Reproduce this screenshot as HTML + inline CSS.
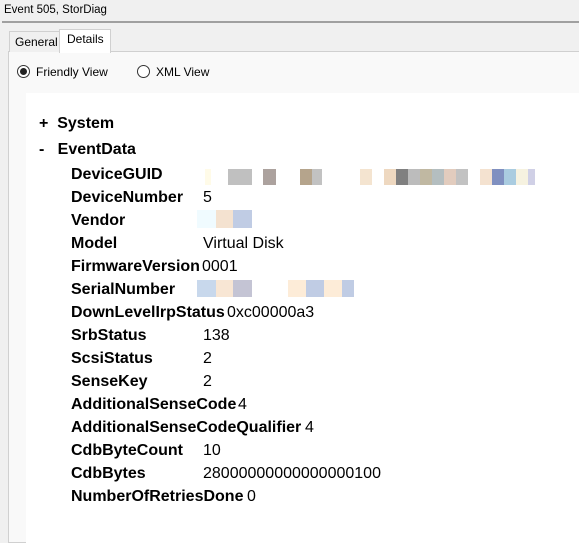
<!DOCTYPE html>
<html><head><style>
body{margin:0;width:579px;height:535px;background:#f0f0f0;position:relative;overflow:hidden;font-family:"Liberation Sans","DejaVu Sans",sans-serif;}
.a{position:absolute;white-space:nowrap;}
.t{font-size:12px;color:#000;}
.l{font-size:16px;font-weight:bold;color:#000;}
.v{font-size:16px;color:#000;}
.b{position:absolute;height:16px;}
</style></head><body>
<div class="a t" style="left:4px;top:4px;font-size:11.5px;">Event 505, StorDiag</div>
<div class="a" style="left:2px;top:21px;width:577px;height:2px;background:#a0a0a0;"></div>
<div class="a" style="left:8px;top:51px;width:580px;height:490px;background:#f9f9f9;border:1px solid #d0d0d0;"></div>
<div class="a" style="left:9px;top:31px;width:49px;height:20px;background:#f0f0f0;border:1px solid #d0d0d0;border-bottom:none;"></div>
<div class="a t" style="left:15px;top:35px;">General</div>
<div class="a" style="left:59px;top:29px;width:50px;height:23px;background:#fff;border:1px solid #d0d0d0;border-bottom:none;"></div>
<div class="a t" style="left:67px;top:32px;">Details</div>
<div class="a" style="left:17px;top:65px;width:11px;height:11px;border:1px solid #333;border-radius:50%;background:#fff;"></div>
<div class="a" style="left:20px;top:68px;width:7px;height:7px;border-radius:50%;background:#222;"></div>
<div class="a t" style="left:36px;top:65px;">Friendly View</div>
<div class="a" style="left:137px;top:65px;width:11px;height:11px;border:1px solid #333;border-radius:50%;background:#fff;"></div>
<div class="a t" style="left:156px;top:65px;">XML View</div>
<div class="a" style="left:26px;top:93px;width:560px;height:450px;background:#fff;"></div>
<div class="a l" style="left:39px;top:115px;">+&nbsp;&nbsp;System</div>
<div class="a l" style="left:39px;top:141px;">-&nbsp;&nbsp;&nbsp;EventData</div>

<div class="a l" style="left:71px;top:166px;">DeviceGUID</div>
<div class="a l" style="left:71px;top:189px;">DeviceNumber</div><div class="a v" style="left:203px;top:189px;">5</div>
<div class="a l" style="left:71px;top:212px;">Vendor</div>
<div class="a l" style="left:71px;top:235px;">Model</div><div class="a v" style="left:203px;top:235px;">Virtual Disk</div>
<div class="a l" style="left:71px;top:258px;">FirmwareVersion</div><div class="a v" style="left:202px;top:258px;">0001</div>
<div class="a l" style="left:71px;top:281px;">SerialNumber</div>
<div class="a l" style="left:71px;top:304px;">DownLevelIrpStatus</div><div class="a v" style="left:227px;top:304px;">0xc00000a3</div>
<div class="a l" style="left:71px;top:327px;">SrbStatus</div><div class="a v" style="left:203px;top:327px;">138</div>
<div class="a l" style="left:71px;top:350px;">ScsiStatus</div><div class="a v" style="left:203px;top:350px;">2</div>
<div class="a l" style="left:71px;top:373px;">SenseKey</div><div class="a v" style="left:203px;top:373px;">2</div>
<div class="a l" style="left:71px;top:396px;">AdditionalSenseCode</div><div class="a v" style="left:238px;top:396px;">4</div>
<div class="a l" style="left:71px;top:419px;">AdditionalSenseCodeQualifier</div><div class="a v" style="left:305px;top:419px;">4</div>
<div class="a l" style="left:71px;top:442px;">CdbByteCount</div><div class="a v" style="left:203px;top:442px;">10</div>
<div class="a l" style="left:71px;top:465px;">CdbBytes</div><div class="a v" style="left:203px;top:465px;">28000000000000000100</div>
<div class="a l" style="left:71px;top:488px;">NumberOfRetriesDone</div><div class="a v" style="left:247px;top:488px;">0</div>

<div class="b" style="top:169px;left:205px;width:6px;background:#fffbe8"></div>
<div class="b" style="top:169px;left:228px;width:24px;background:#c0c0c0"></div>
<div class="b" style="top:169px;left:263px;width:13px;background:#aca29e"></div>
<div class="b" style="top:169px;left:300px;width:12px;background:#b5a48c"></div>
<div class="b" style="top:169px;left:312px;width:10px;background:#c2c2c2"></div>
<div class="b" style="top:169px;left:360px;width:12px;background:#f4e4d0"></div>
<div class="b" style="top:169px;left:384px;width:12px;background:#eed8c0"></div>
<div class="b" style="top:169px;left:396px;width:12px;background:#808080"></div>
<div class="b" style="top:169px;left:408px;width:12px;background:#bcbcbc"></div>
<div class="b" style="top:169px;left:420px;width:12px;background:#c0b8a2"></div>
<div class="b" style="top:169px;left:432px;width:12px;background:#b4bec0"></div>
<div class="b" style="top:169px;left:444px;width:12px;background:#e2ccbe"></div>
<div class="b" style="top:169px;left:456px;width:12px;background:#c2c2c2"></div>
<div class="b" style="top:169px;left:480px;width:12px;background:#f4e2d0"></div>
<div class="b" style="top:169px;left:492px;width:12px;background:#8090c0"></div>
<div class="b" style="top:169px;left:504px;width:12px;background:#aacce0"></div>
<div class="b" style="top:169px;left:516px;width:12px;background:#f6f2e0"></div>
<div class="b" style="top:169px;left:528px;width:7px;background:#d0d0e6"></div>
<div class="b" style="top:210px;left:197px;width:19px;height:18px;background:#f0fbff"></div>
<div class="b" style="top:210px;left:216px;width:17px;height:18px;background:#f4e2d0"></div>
<div class="b" style="top:210px;left:233px;width:19px;height:18px;background:#c0cce4"></div>
<div class="b" style="top:280px;left:197px;width:19px;height:17px;background:#c8d8ec"></div>
<div class="b" style="top:280px;left:216px;width:17px;height:17px;background:#f8e6d4"></div>
<div class="b" style="top:280px;left:233px;width:19px;height:17px;background:#c4c4d4"></div>
<div class="b" style="top:280px;left:288px;width:18px;height:17px;background:#fdecd8"></div>
<div class="b" style="top:280px;left:306px;width:18px;height:17px;background:#c0cce4"></div>
<div class="b" style="top:280px;left:324px;width:18px;height:17px;background:#fdecd8"></div>
<div class="b" style="top:280px;left:342px;width:12px;height:17px;background:#c0cce4"></div>
</body></html>
